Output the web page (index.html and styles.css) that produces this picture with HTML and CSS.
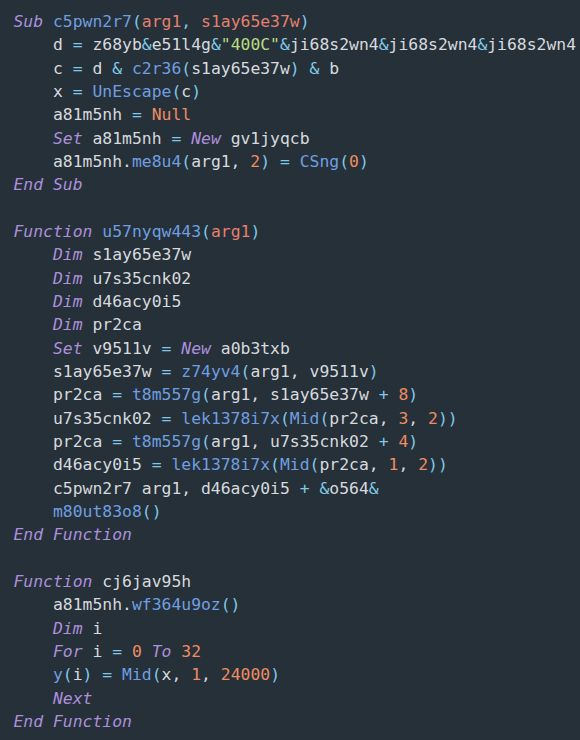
FILE: index.html
```html
<!DOCTYPE html>
<html>
<head>
<meta charset="utf-8">
<link rel="stylesheet" href="styles.css">
</head>
<body>
<pre class="code"><span class="kw">Sub</span> <span class="fn">c5pwn2r7</span><span class="op">(</span><span class="pa">arg1</span><span class="op">,</span> <span class="pa">s1ay65e37w</span><span class="op">)</span>
    d <span class="op">=</span> z68yb<span class="op">&amp;</span>e51l4g<span class="op">&amp;</span><span class="st">"400C"</span><span class="op">&amp;</span>ji68s2wn4<span class="op">&amp;</span>ji68s2wn4<span class="op">&amp;</span>ji68s2wn4
    c <span class="op">=</span> d <span class="op">&amp;</span> <span class="fn">c2r36</span><span class="op">(</span>s1ay65e37w<span class="op">)</span> <span class="op">&amp;</span> b
    x <span class="op">=</span> <span class="fn">UnEscape</span><span class="op">(</span>c<span class="op">)</span>
    a81m5nh <span class="op">=</span> <span class="nu">Null</span>
    <span class="kw">Set</span> a81m5nh <span class="op">=</span> <span class="kw">New</span> gv1jyqcb
    a81m5nh.<span class="fn">me8u4</span><span class="op">(</span>arg1, <span class="nu">2</span><span class="op">)</span> <span class="op">=</span> <span class="fn">CSng</span><span class="op">(</span><span class="nu">0</span><span class="op">)</span>
<span class="kw">End Sub</span>

<span class="kw">Function</span> <span class="fn">u57nyqw443</span><span class="op">(</span><span class="pa">arg1</span><span class="op">)</span>
    <span class="kw">Dim</span> s1ay65e37w
    <span class="kw">Dim</span> u7s35cnk02
    <span class="kw">Dim</span> d46acy0i5
    <span class="kw">Dim</span> pr2ca
    <span class="kw">Set</span> v9511v <span class="op">=</span> <span class="kw">New</span> a0b3txb
    s1ay65e37w <span class="op">=</span> <span class="fn">z74yv4</span><span class="op">(</span>arg1, v9511v<span class="op">)</span>
    pr2ca <span class="op">=</span> <span class="fn">t8m557g</span><span class="op">(</span>arg1, s1ay65e37w <span class="op">+</span> <span class="nu">8</span><span class="op">)</span>
    u7s35cnk02 <span class="op">=</span> <span class="fn">lek1378i7x</span><span class="op">(</span><span class="fn">Mid</span><span class="op">(</span>pr2ca, <span class="nu">3</span>, <span class="nu">2</span><span class="op">))</span>
    pr2ca <span class="op">=</span> <span class="fn">t8m557g</span><span class="op">(</span>arg1, u7s35cnk02 <span class="op">+</span> <span class="nu">4</span><span class="op">)</span>
    d46acy0i5 <span class="op">=</span> <span class="fn">lek1378i7x</span><span class="op">(</span><span class="fn">Mid</span><span class="op">(</span>pr2ca, <span class="nu">1</span>, <span class="nu">2</span><span class="op">))</span>
    c5pwn2r7 arg1, d46acy0i5 <span class="op">+</span> <span class="op">&amp;</span>o564<span class="op">&amp;</span>
    <span class="fn">m80ut83o8</span><span class="op">()</span>
<span class="kw">End Function</span>

<span class="kw">Function</span> cj6jav95h
    a81m5nh.<span class="fn">wf364u9oz</span><span class="op">()</span>
    <span class="kw">Dim</span> i
    <span class="kw">For</span> i <span class="op">=</span> <span class="nu">0</span> <span class="kw">To</span> <span class="nu">32</span>
    <span class="fn">y</span><span class="op">(</span>i<span class="op">)</span> <span class="op">=</span> <span class="fn">Mid</span><span class="op">(</span>x, <span class="nu">1</span>, <span class="nu">24000</span><span class="op">)</span>
    <span class="kw">Next</span>
<span class="kw">End Function</span></pre>
</body>
</html>
```
FILE: styles.css
```css
html, body {
  margin: 0;
  padding: 0;
  background: #263038;
  height: 100%;
  overflow: hidden;
}
.code {
  margin: 0;
  padding: 10px 0 0 13.5px;
  font-family: "DejaVu Sans Mono", "Liberation Mono", monospace;
  font-size: 16.4px;
  line-height: 23.33px;
  color: #d6dade;
  white-space: pre;
}
.kw {
  color: #ac8fdc;
  font-style: italic;
}
.fn {
  color: #6e9fe0;
}
.pa {
  color: #e57f6e;
}
.op {
  color: #7fc8e8;
}
.st {
  color: #b9dc82;
}
.nu {
  color: #ef8c62;
}
```
